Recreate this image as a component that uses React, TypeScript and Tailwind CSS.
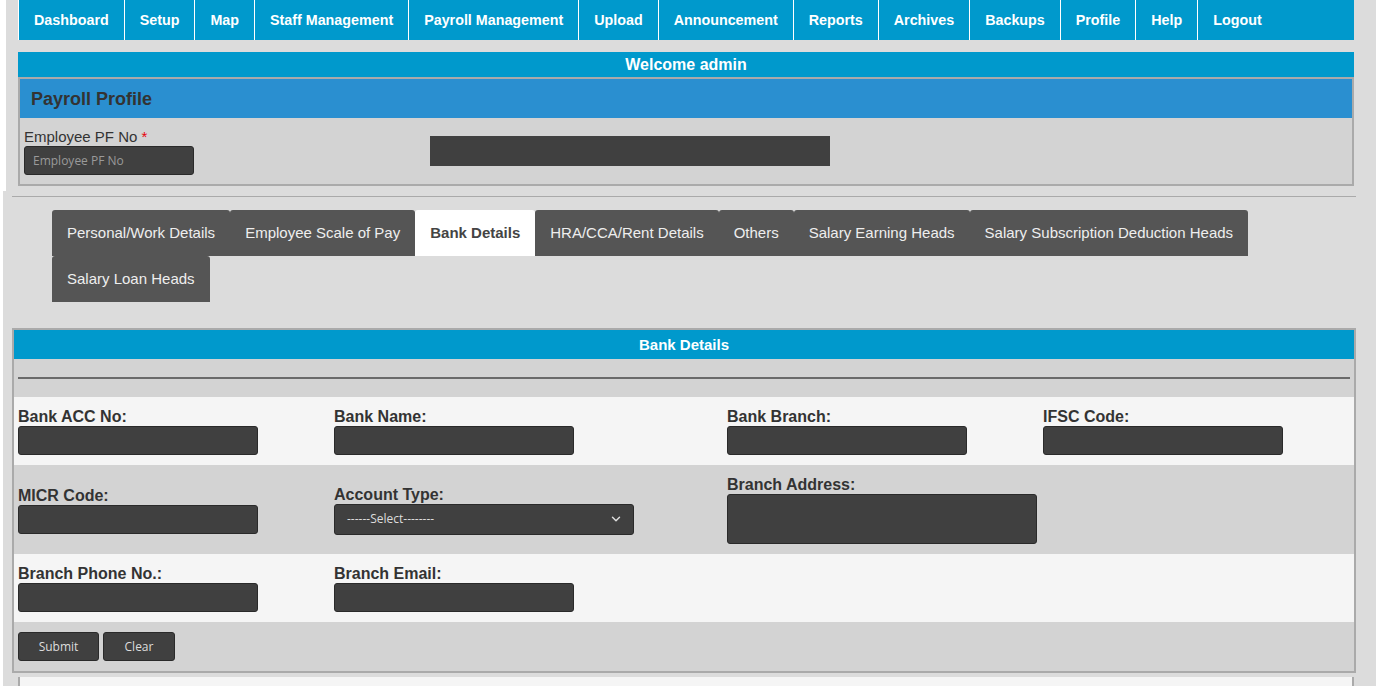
import React from 'react';
import { ChevronDown } from 'lucide-react';

const navItems = [
  'Dashboard',
  'Setup',
  'Map',
  'Staff Management',
  'Payroll Management',
  'Upload',
  'Announcement',
  'Reports',
  'Archives',
  'Backups',
  'Profile',
  'Help',
  'Logout',
];

const tabs = [
  'Personal/Work Details',
  'Employee Scale of Pay',
  'Bank Details',
  'HRA/CCA/Rent Details',
  'Others',
  'Salary Earning Heads',
  'Salary Subscription Deduction Heads',
  'Salary Loan Heads',
];

const arial = { fontFamily: '"Liberation Sans", Arial, sans-serif' };

const inputCls =
  'block h-[29px] w-[240px] rounded-[3px] border border-[#2a2a2a] bg-[#404040] px-2 text-[12px] text-[#ddd] outline-none font-["Open_Sans",sans-serif]';

const Field: React.FC<{ label: string; children?: React.ReactNode }> = ({ label, children }) => (
  <div className="pl-[4px]">
    <div className="text-[16px] font-bold leading-[19px] text-[#333]">{label}</div>
    {children ?? <input className={inputCls} />}
  </div>
);

const App: React.FC = () => {
  return (
    <div className="min-h-[686px] bg-white" style={arial}>
      {/* Top section */}
      <div className="ml-[6px] bg-[#dcdcdc] pb-[5px] pl-[12px] pr-[22px]">
        <nav className="flex h-[40px] bg-[#0099cc]">
          {navItems.map((item) => (
            <a
              key={item}
              className="border-l border-white px-[15px] text-[14.3px] font-bold leading-[40px] text-white"
            >
              {item}
            </a>
          ))}
        </nav>

        <div className="mt-[12px] h-[25px] bg-[#0099cc] text-center text-[16px] font-bold leading-[25px] text-white">
          Welcome admin
        </div>

        <div className="border-2 border-[#aaa]">
          <div className="h-[39px] bg-[#2a8fd0] pl-[11px] text-[18px] font-bold leading-[40px] text-[#333]">
            Payroll Profile
          </div>
          <div className="flex h-[66px] items-center bg-[#d3d3d3] pl-[4px]">
            <div className="w-[406px]">
              <div className="text-[15px] leading-[18px] text-[#333]">
                Employee PF No <span className="text-red-600">*</span>
              </div>
              <input
                placeholder="Employee PF No"
                className="block h-[29px] w-[170px] rounded-[3px] border border-[#2a2a2a] bg-[#404040] px-[8px] text-[12px] text-[#ddd] outline-none placeholder:text-[#9a9a9a] font-['Open_Sans',sans-serif]"
              />
            </div>
            <div className="h-[30px] w-[400px] bg-[#404040]" />
          </div>
        </div>
      </div>

      {/* Second section */}
      <div className="ml-[3px] bg-[#dcdcdc] pt-[5px]">
        <div className="ml-[9px] mr-[20px] border-t border-[#aaa]" />

        <div className="ml-[49px] mr-[20px] mt-[13px] flex flex-wrap">
          {tabs.map((t) => {
            const active = t === 'Bank Details';
            return (
              <div
                key={t}
                className={
                  active
                    ? 'rounded-t-[3px] bg-white px-[15px] py-[14px] text-[15px] font-bold leading-[18px] text-[#444]'
                    : 'rounded-t-[3px] bg-[#555] px-[15px] py-[14px] text-[15px] leading-[18px] text-[#eee]'
                }
              >
                {t}
              </div>
            );
          })}
        </div>

        <div className="ml-[9px] mr-[20px] mt-[26px] border-2 border-[#aaa]">
          <div className="h-[29px] bg-[#0099cc] text-center text-[15px] font-bold leading-[29px] text-white">
            Bank Details
          </div>
          <div className="bg-[#d3d3d3] px-[4px] pb-[18px] pt-[18px]">
            <div className="border-t-2 border-[#6a6a6a]" />
          </div>

          <div className="grid grid-cols-[316px_393px_316px_1fr] items-center bg-[#f5f5f5] py-[10px]">
            <Field label="Bank ACC No:" />
            <Field label="Bank Name:" />
            <Field label="Bank Branch:" />
            <Field label="IFSC Code:" />
          </div>

          <div className="grid grid-cols-[316px_393px_316px_1fr] items-center bg-[#d3d3d3] py-[10px]">
            <Field label="MICR Code:" />
            <Field label="Account Type:">
              <div className="flex h-[31px] w-[300px] items-center justify-between rounded-[3px] border border-[#2a2a2a] bg-[#404040] pl-[12px] pr-[10px] text-[12px] text-[#ddd] font-['Open_Sans',sans-serif]">
                <span>------Select--------</span>
                <ChevronDown size={14} strokeWidth={2.5} className="text-[#ddd]" />
              </div>
            </Field>
            <Field label="Branch Address:">
              <div className="h-[50px] w-[310px] rounded-[3px] border border-[#2a2a2a] bg-[#404040]" />
            </Field>
            <div />
          </div>

          <div className="grid grid-cols-[316px_393px_316px_1fr] items-center bg-[#f5f5f5] py-[10px]">
            <Field label="Branch Phone No.:" />
            <Field label="Branch Email:" />
            <div />
            <div />
          </div>

          <div className="flex gap-[4px] bg-[#d3d3d3] py-[10px] pl-[4px]">
            <button className="h-[29px] w-[81px] rounded-[3px] border border-[#2a2a2a] bg-[#404040] text-[12px] text-[#ddd] font-['Open_Sans',sans-serif]">
              Submit
            </button>
            <button className="h-[29px] w-[72px] rounded-[3px] border border-[#2a2a2a] bg-[#404040] text-[12px] text-[#ddd] font-['Open_Sans',sans-serif]">
              Clear
            </button>
          </div>
        </div>

        <div className="ml-[15px] mr-[22px] mt-[4px] h-[20px] border-x-2 border-[#aaa] bg-[#f5f5f5]" />
      </div>
    </div>
  );
};

export default App;
